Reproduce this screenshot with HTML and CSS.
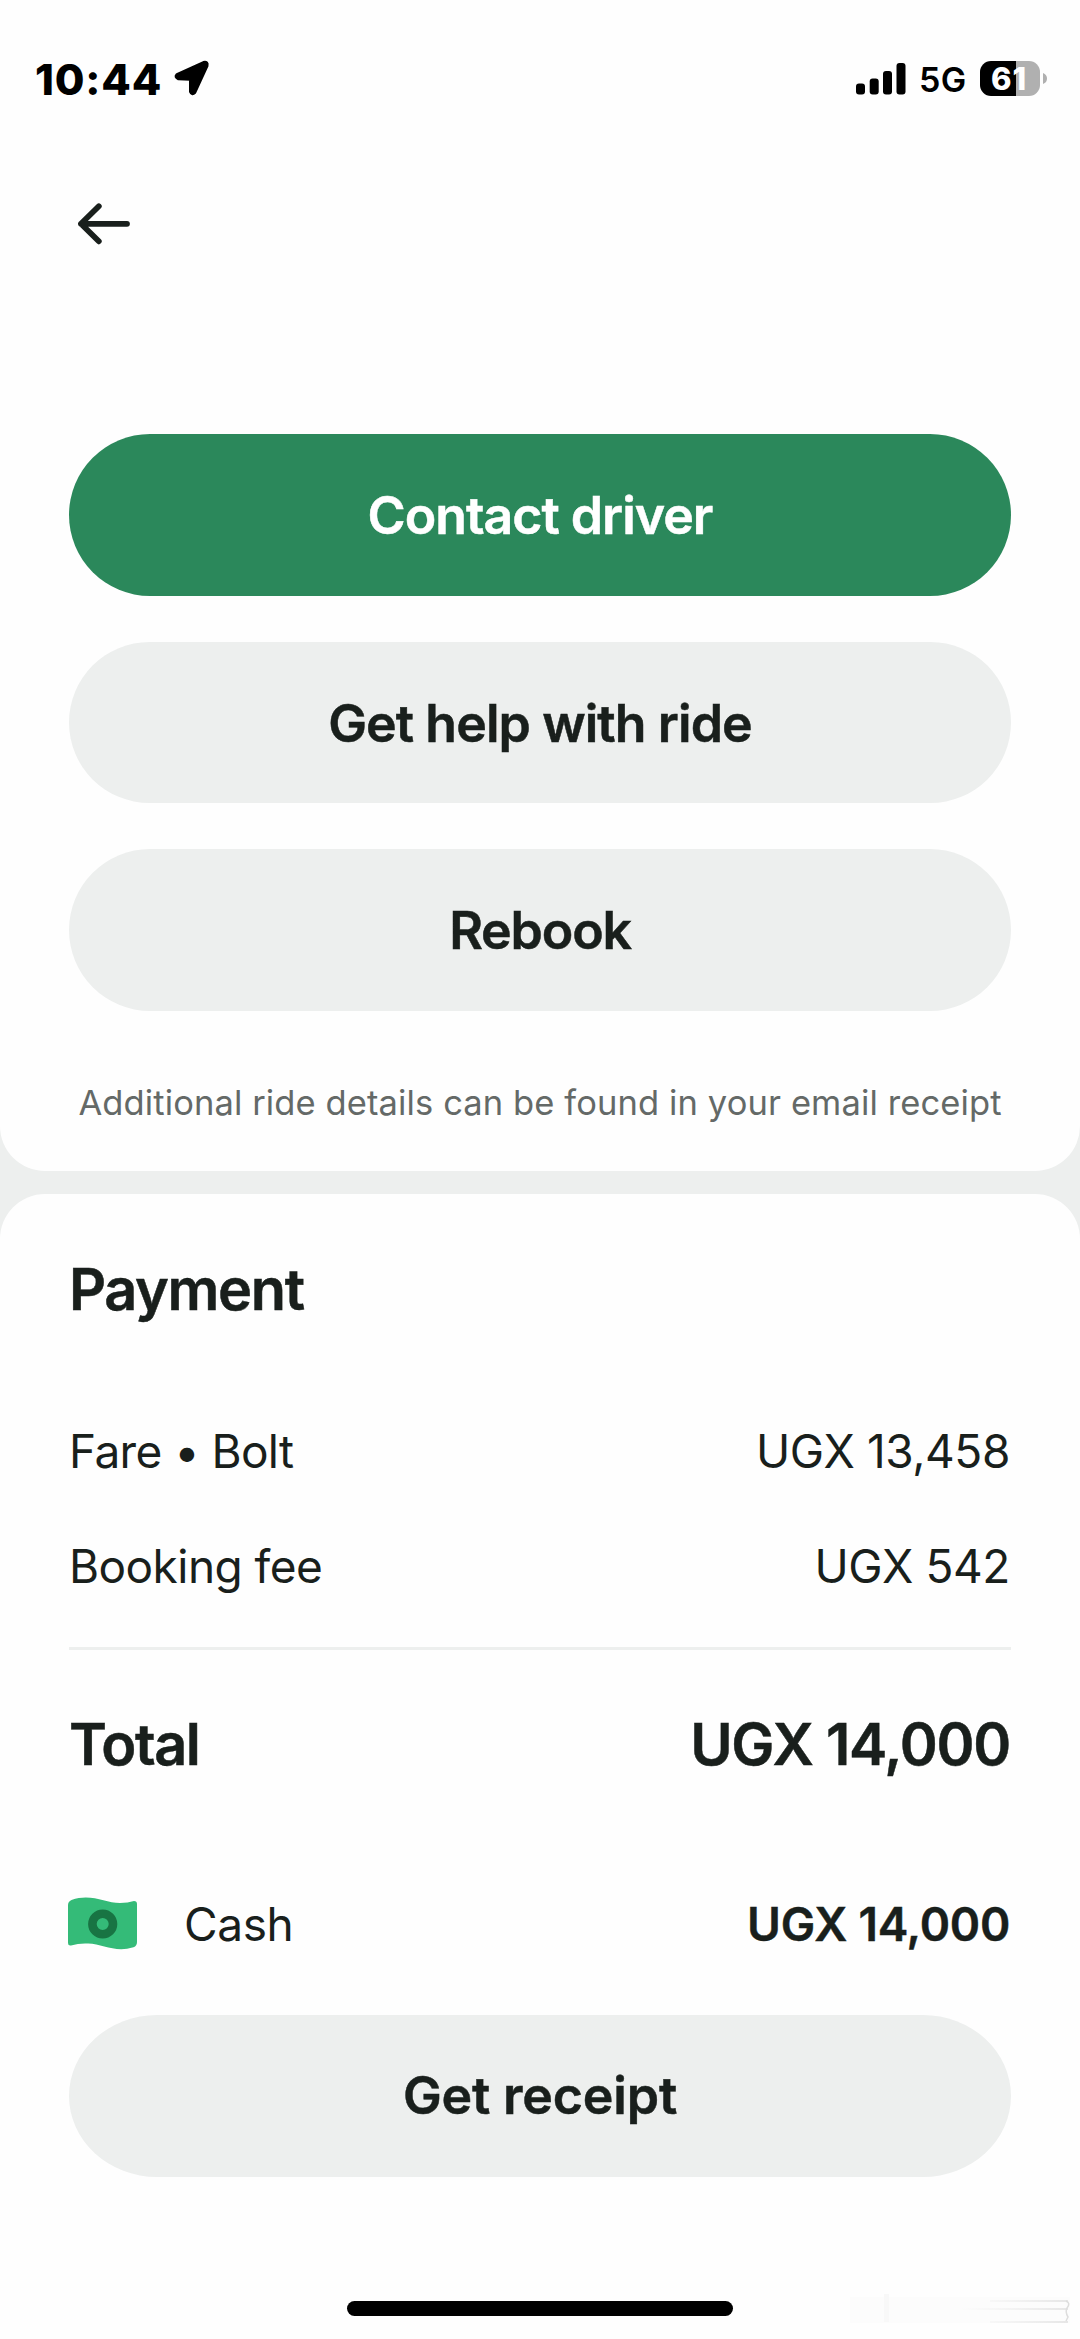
FILE: index.html
```html
<!DOCTYPE html>
<html lang="en">
<head>
<meta charset="utf-8">
<title>Ride details</title>
<link rel="stylesheet" href="styles.css">
</head>
<body>
<main class="screen">
  <section class="card card-top">
    <header class="status">
      <div class="status-left">
        <span class="time">10:44</span>
        <svg class="location" width="36" height="37" viewBox="0 0 36 37"><path d="M3 14.500 29.500 2.500Q34 1.500 33 5.800L20.800 32.500Q18 35.500 16.500 31.800V19.300L4.500 18.800Q0.500 17 3 14.500Z" fill="#000" stroke="#000" stroke-width="3" stroke-linejoin="round"/></svg>
      </div>
      <div class="status-right">
        <svg class="signal" width="50" height="32" viewBox="0 0 50 32"><rect x="0" y="20.500" width="9" height="11" rx="3"/><rect x="13.700" y="15.500" width="9" height="16" rx="3"/><rect x="27" y="8" width="9" height="23.500" rx="3"/><rect x="40.500" y="0" width="9" height="31.500" rx="3"/></svg>
        <span class="network">5G</span>
        <div class="battery"><span class="level">61</span></div>
        <svg class="battery-tip" width="4" height="11" viewBox="0 0 4 11"><path d="M0 0Q4 1.500 4 5.500T0 11Z" fill="#b0b0b0"/></svg>
      </div>
    </header>
    <nav class="nav">
      <svg class="back" width="54" height="44" viewBox="0 0 54 44"><path d="M50 21.800H4M21.800 4.300 4 21.800 21.800 39.300" fill="none" stroke="#191f1c" stroke-width="5.800" stroke-linecap="round" stroke-linejoin="round"/></svg>
    </nav>
    <div class="actions">
      <button class="button primary">Contact driver</button>
      <button class="button help">Get help with ride</button>
      <button class="button rebook">Rebook</button>
    </div>
    <p class="note">Additional ride details can be found in your email receipt</p>
  </section>

  <section class="card card-payment">
    <h2 class="heading">Payment</h2>
    <div class="row fare"><span class="fare-label">Fare • Bolt</span><span class="amount">UGX 13,458</span></div>
    <div class="row booking"><span class="booking-label">Booking fee</span><span class="amount">UGX 542</span></div>
    <hr class="divider">
    <div class="row total"><span>Total</span><span class="total-amount">UGX 14,000</span></div>
    <div class="row cash">
      <span class="method">
        <svg class="note-icon" width="70" height="54" viewBox="0 0 70 54"><path d="M0 8Q0 4.500 3.500 3C23-4 37 6 52 6Q60 6 66 4Q69 4 69 7V45Q69 49 65.500 50.300C47 56 35 47 20 46.500Q11 46 3 48.500Q0 49 0 46Z" fill="#34bb78"/><circle cx="34.700" cy="27" r="10.300" fill="none" stroke="#187443" stroke-width="8.600"/></svg>
        <span>Cash</span>
      </span>
      <span class="cash-amount">UGX 14,000</span>
    </div>
    <button class="button receipt">Get receipt</button>
    <div class="home-indicator"></div>
    <svg class="smudge" width="240" height="50" viewBox="0 0 240 50">
      <defs><linearGradient id="fade"><stop offset="0" stop-color="#ededed" stop-opacity="0"/><stop offset="1" stop-color="#e6e6e6"/></linearGradient></defs>
      <rect x="0" y="3" width="220" height="26" fill="#fcfcfc"/>
      <rect x="34" y="0" width="5" height="28" fill="#f8f8f8"/>
      <path d="M140 6H218V8H140ZM110 14H218V16H110ZM140 27H218V29H140Z" fill="url(#fade)"/>
      <path d="M216 7Q221 9 217 14Q215 18 218 23L216 27" fill="none" stroke="#dddddd" stroke-width="1.500"/>
    </svg>
  </section>
</main>
</body>
</html>
```
FILE: styles.css
```css
* { box-sizing: border-box; }
body { margin: 0; background: #edefee; }
.screen {
  width: 1080px;
  height: 2339px;
  display: flex;
  flex-direction: column;
  gap: 23px;
  overflow: hidden;
  color: #191f1c;
  font-family: Inter, "Liberation Sans", sans-serif;
}
.card { background: #fefefe; }
.card-top { height: 1171px; border-radius: 0 0 45px 45px; }
.card-payment {
  position: relative;
  height: 1145px;
  padding: 55px 69px 0;
  border-radius: 45px 45px 0 0;
}

.status {
  height: 157px;
  padding: 0 33px 0 35px;
  display: flex;
  align-items: center;
  justify-content: space-between;
  color: #000;
}
.status-left, .status-right { display: flex; align-items: center; }
.time { width: 139px; font-size: 43px; font-weight: 800; letter-spacing: 0.800px; }
.location { margin-top: -1px; }
.signal { margin-top: 1px; }
.network { width: 61px; margin-left: 13px; font-size: 34px; font-weight: 600; letter-spacing: 0.300px; margin-top: 2px; }
.battery {
  width: 60px;
  height: 35px;
  border-radius: 11px;
  background: linear-gradient(to right, #000 36.500px, #b0b0b0 36.500px);
  color: #fff;
  display: flex;
  align-items: center;
  justify-content: center;
}
.level { margin-left: -2px; font-size: 31px; line-height: 35px; font-weight: 800; letter-spacing: 0.800px; }
.battery-tip { margin-left: 3px; }

.nav { height: 133px; padding-left: 77px; display: flex; align-items: center; }

.actions { margin-top: 144px; padding: 0 69px; display: flex; flex-direction: column; gap: 46px; }
.button {
  display: block;
  width: 100%;
  height: 161.500px;
  padding: 1px 0 0;
  border: 0;
  border-radius: 81px;
  background: #edefee;
  color: inherit;
  font-family: inherit;
  font-size: 51.800px;
  font-weight: 600;
  line-height: 161px;
  text-align: center;
  letter-spacing: -0.900px;
  -webkit-text-stroke: 0.500px currentColor;
}
.primary { background: #2b885b; color: #fff; letter-spacing: -1px; }
.rebook { letter-spacing: -1.150px; }
.note {
  margin: 62px 0 0;
  color: #646967;
  font-size: 34.500px;
  line-height: 60px;
  letter-spacing: 0.110px;
  text-align: center;
}

.heading { margin: 0; font-size: 57.600px; font-weight: 600; line-height: 80px; letter-spacing: -1.350px; -webkit-text-stroke: 0.500px currentColor; }
.row {
  display: flex;
  justify-content: space-between;
  font-size: 46px;
  line-height: 60px;
}
.fare { margin-top: 92px; }
.fare-label { letter-spacing: -0.650px; }
.booking-label { letter-spacing: -0.550px; }
.amount { margin-right: 1px; letter-spacing: -0.400px; }
.booking { margin-top: 55px; }
.divider { height: 3px; margin: 51px 0 0; border: 0; background: #edefee; }
.total { margin-top: 54px; font-size: 57.600px; font-weight: 600; line-height: 80px; letter-spacing: -1.350px; -webkit-text-stroke: 0.500px currentColor; }
.total-amount { margin-right: 1px; letter-spacing: -1.250px; }
.cash { margin-top: 110px; }
.method { display: flex; align-items: center; gap: 46px; margin-left: -1px; letter-spacing: -0.400px; }
.cash-amount { margin-right: 1px; font-weight: 600; letter-spacing: -0.250px; -webkit-text-stroke: 0.500px currentColor; }
.receipt { margin-top: 61px; padding: 0; letter-spacing: -0.150px; border-radius: 88px / 81px; }
.home-indicator { width: 386px; height: 15px; margin: 124.500px auto 0; border-radius: 8px; background: #000; }
.smudge { position: absolute; right: -10px; bottom: -5px; }
```
